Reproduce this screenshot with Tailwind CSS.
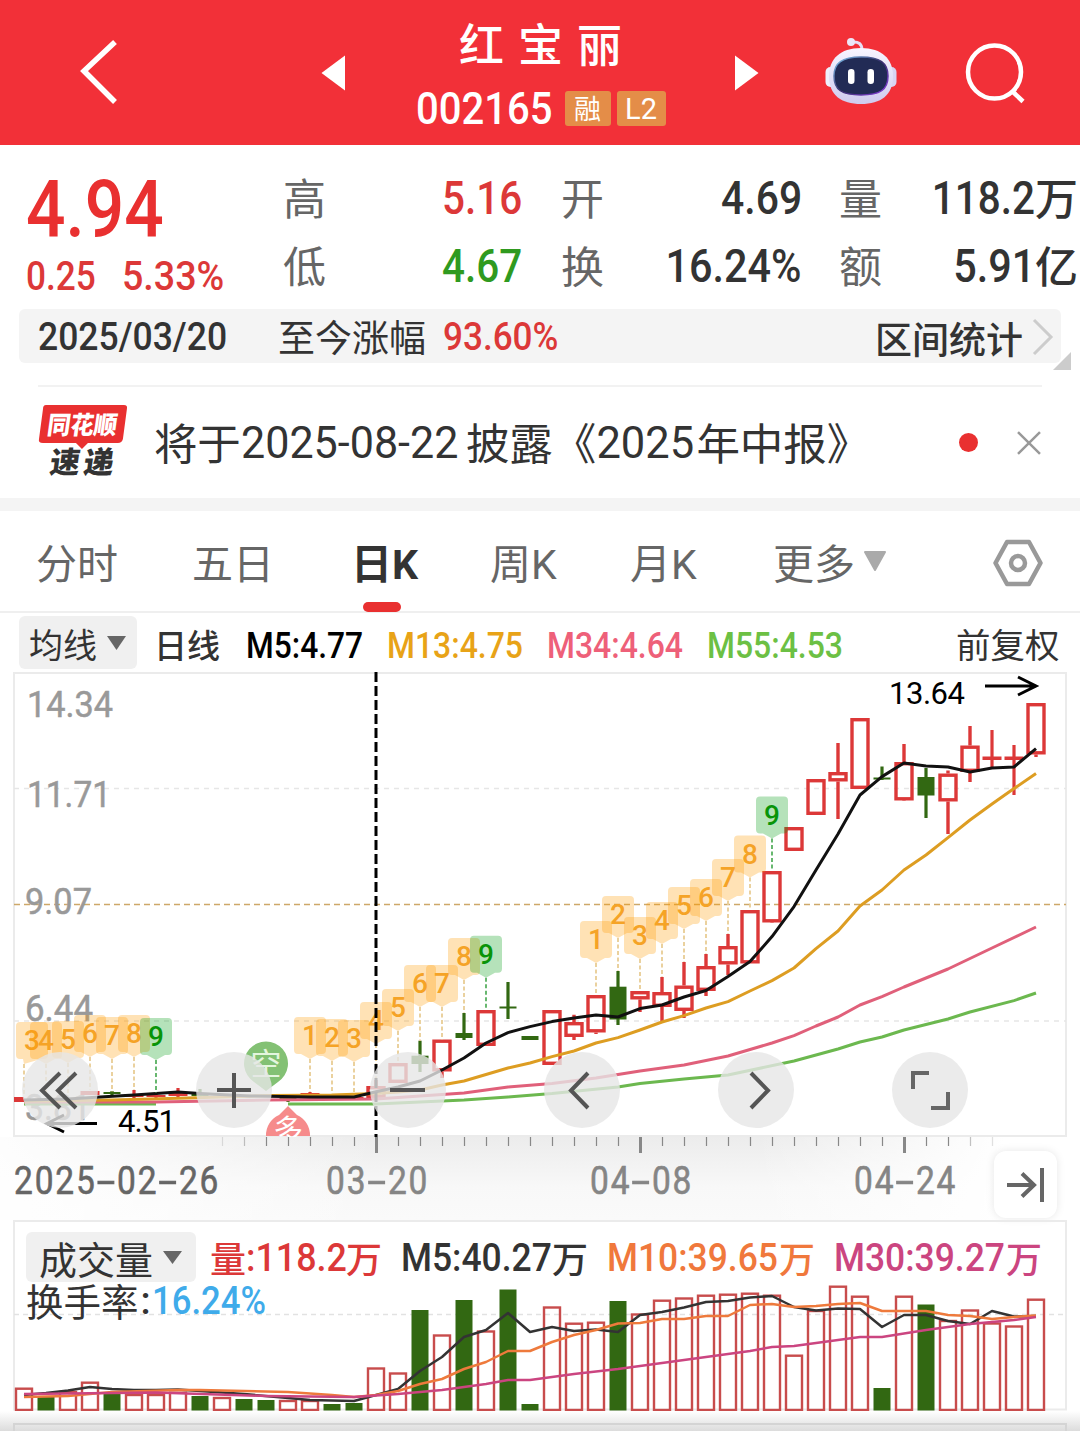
<!DOCTYPE html>
<html lang="zh-CN">
<head>
    <meta charset="UTF-8">
    <meta name="viewport" content="width=device-width, initial-scale=1.0">
    <title>红宝丽 002165</title>
    <script src="https://cdn.jsdelivr.net/npm/@tailwindcss/browser@4"></script>
</head>
<body class="w-[1080px] h-[1435px] overflow-hidden bg-white text-[#333] font-[family-name:Roboto,'Noto_Sans_CJK_SC',sans-serif] leading-none whitespace-nowrap">

    <!-- Header -->
    <header class="h-[145px] bg-[#f23038] text-white flex items-center">
        <div class="w-[200px] pl-[78px]">
            <svg class="w-[42px] h-[70px]" viewBox="0 0 42 70" fill="none" stroke="#fff" stroke-width="5.5"><path d="M37 4 L6 33 L37 64"/></svg>
        </div>
        <div class="w-[200px] pl-[121px]">
            <svg class="w-[25px] h-[36px]" viewBox="0 0 25 36" fill="#fff"><path d="M0.500 18 L24 0.500 V35.500 Z"/></svg>
        </div>
        <div class="w-[281px] flex flex-col items-center pt-[6px]">
            <h1 class="text-[45px] font-medium tracking-[14px] pl-[14px] h-[66px] leading-[44px]">红宝丽</h1>
            <div class="flex items-center h-[36px] w-[250px] gap-[6px]">
                <div class="w-[143px] text-[45px] font-medium"><span class="inline-block origin-left scale-x-[.89]">002165</span></div>
                <span class="w-[46px] h-[35px] rounded-[3px] bg-[#e48d48] text-[27px] flex items-center justify-center pt-[3px]">融</span>
                <span class="w-[49px] h-[35px] rounded-[3px] bg-[#e48d48] text-[29px] flex items-center justify-center pt-[2px]">L2</span>
            </div>
        </div>
        <div class="w-[141px] pl-[53px]">
            <svg class="w-[25px] h-[36px]" viewBox="0 0 25 36" fill="#fff"><path d="M24.500 18 L1 0.500 V35.500 Z"/></svg>
        </div>
        <div class="w-[142px]">
            <svg class="w-[78px] h-[72px]" viewBox="822 36 78 72">
                <defs>
                    <linearGradient id="shell" x1="0" y1="0" x2="0" y2="1"><stop offset="0" stop-color="#f8f5ff"/><stop offset="1" stop-color="#cfcbee"/></linearGradient>
                    <linearGradient id="rim" x1="0" y1="0" x2="1" y2="1"><stop offset="0" stop-color="#7fc4ee"/><stop offset=".5" stop-color="#39306e"/><stop offset="1" stop-color="#8a3de0"/></linearGradient>
                </defs>
                <path d="M852 41 q10 -1 10 8" fill="none" stroke="#e6dff5" stroke-width="3"/>
                <circle cx="851" cy="41" r="4" fill="#ece6f8"/>
                <rect x="825.500" y="66" width="10" height="20" rx="5" fill="#eef0fc"/>
                <rect x="886.500" y="66" width="10" height="20" rx="5" fill="#d8d4f2"/>
                <path d="M861 47 C882 47 893 58 893 75 C893 94 881 103 861 103 C841 103 829 94 829 75 C829 58 840 47 861 47Z" fill="url(#shell)"/>
                <path d="M861 56 C880 56 888 62 888 75 C888 89 880 94 861 94 C842 94 834 89 834 75 C834 62 842 56 861 56Z" fill="#222b55" stroke="url(#rim)" stroke-width="1.500"/>
                <rect x="848" y="68" width="6.500" height="15" rx="3.200" fill="#fff"/>
                <rect x="867.500" y="68" width="6.500" height="15" rx="3.200" fill="#fff"/>
            </svg>
        </div>
        <svg class="w-[62px] h-[62px]" viewBox="0 0 62 62" fill="none" stroke="#fff" stroke-width="4.500"><circle cx="30.500" cy="30" r="26.500"/><path d="M48 49 L59 59.500"/></svg>
    </header>

    <!-- Quote -->
    <section class="h-[164px] flex pt-[18px]">
        <div class="w-[284px] pl-[26px] text-[#e93030] font-medium">
            <div class="h-[94px] pt-[8px] text-[79px]"><span class="inline-block origin-left scale-x-[.88]">4.94</span></div>
            <div class="flex text-[40px] text-[#dc3838]">
                <div class="w-[96px]"><span class="inline-block origin-left scale-x-[.88]">0.25</span></div>
                <div><span class="inline-block origin-left scale-x-[.94]">5.33%</span></div>
            </div>
        </div>
        <div class="w-[238px] text-[47px] font-medium text-right">
            <div class="h-[68px] flex items-center justify-between"><span class="text-[43px] font-normal text-[#666] pt-[7px] -ml-px">高</span><span class="inline-block origin-right scale-x-[.86] text-[#dc3838]">5.16</span></div>
            <div class="h-[68px] flex items-center justify-between"><span class="text-[43px] font-normal text-[#666] pt-[7px] -ml-px">低</span><span class="inline-block origin-right scale-x-[.86] text-[#2f9a1f]">4.67</span></div>
        </div>
        <div class="w-[241px] ml-[39px] text-[47px] font-medium text-right">
            <div class="h-[68px] flex items-center justify-between"><span class="text-[43px] font-normal text-[#666] pt-[7px]">开</span><span class="inline-block origin-right scale-x-[.87]">4.69</span></div>
            <div class="h-[68px] flex items-center justify-between"><span class="text-[43px] font-normal text-[#666] pt-[7px]">换</span><span class="inline-block origin-right scale-x-[.88] -ml-10">16.24%</span></div>
        </div>
        <div class="w-[239px] ml-[37px] text-[47px] font-medium text-right">
            <div class="h-[68px] flex items-center justify-between"><span class="text-[43px] font-normal text-[#666] pt-[7px]">量</span><span class="flex items-center -ml-10"><span class="inline-block origin-right scale-x-[.86]">118.2</span><span class="text-[43px] pt-[6px]">万</span></span></div>
            <div class="h-[68px] flex items-center justify-between"><span class="text-[43px] font-normal text-[#666] pt-[7px]">额</span><span class="flex items-center -ml-10"><span class="inline-block origin-right scale-x-[.88]">5.91</span><span class="text-[43px] pt-[6px]">亿</span></span></div>
        </div>
    </section>

    <!-- Interval stats -->
    <section class="relative mx-[19px] h-[54px] rounded-[6px] bg-[#f4f4f4] flex items-center text-[37px]">
        <div class="w-[259px] pl-[19px] pt-[2px] text-[39px] font-medium"><span class="inline-block origin-left scale-x-[.91]">2025/03/20</span></div>
        <div class="w-[165px] pt-[6px]">至今涨幅</div>
        <div class="w-[432px] pt-[2px] text-[39px] font-medium text-[#dc3838]"><span class="inline-block origin-left scale-x-[.9]">93.60%</span></div>
        <div class="font-medium pt-[11px]">区间统计</div>
        <svg class="ml-[9px] mt-[2px] w-[22px] h-[40px]" viewBox="0 0 22 40" fill="none" stroke="#ccc" stroke-width="3"><path d="M2 3 L19 20 L2 37"/></svg>
        <svg class="absolute left-[1034px] top-[43px] w-[18px] h-[18px]" viewBox="0 0 18 18" fill="#ccc"><path d="M18 0 V18 H0 Z"/></svg>
    </section>

    <!-- News -->
    <section class="mx-[38px] mt-[22px] h-[113px] border-t-2 border-[#f2f2f2] flex items-center">
        <svg class="w-[116px] h-[80px]" viewBox="38 402 116 80">
            <path d="M46 404 H124 Q128 404 127 408 L123 438 Q122 442 118 442 H88 L82 448 L76 442 H43 Q38 442 39 438 L43 408 Q43 404 46 404Z" fill="#e93030"/>
            <g font-family="Noto Sans CJK SC" font-weight="900" transform="skewX(-8)">
                <text x="107" y="433" font-size="25" fill="#fff" textLength="70" lengthAdjust="spacingAndGlyphs">同花顺</text>
                <text x="115" y="472" font-size="30" fill="#333">速</text>
                <text x="149" y="472" font-size="30" fill="#333">递</text>
            </g>
        </svg>
        <div class="w-[806px] text-[43.500px] flex items-center">
            <span class="pt-[6px]">将于</span><span class="w-[225px] pt-[2px]"><span class="inline-block origin-left scale-x-[.99]">2025-08-22</span></span><span class="pt-[6px]">披露《</span><span class="w-[100px] pt-[2px]">2025</span><span class="pt-[6px]">年中报》</span>
        </div>
        <span class="w-[19px] h-[19px] rounded-full bg-[#e93030]"></span>
        <svg class="ml-[38px] w-[26px] h-[26px]" viewBox="0 0 26 26" fill="none" stroke="#999" stroke-width="2.500"><path d="M2 2 L24 24 M24 2 L2 24"/></svg>
    </section>
    <div class="h-[13px] bg-[#f4f4f4]"></div>

    <!-- Tabs -->
    <nav class="h-[102px] border-b-2 border-[#efefef] flex items-center text-[41px] text-[#666] pl-[36px]">
        <div class="w-[156px] pt-[8px]">分时</div>
        <div class="w-[159px] pt-[8px]">五日</div>
        <div class="relative w-[139px] pt-[8px] font-bold text-[#333]">日K<span class="absolute left-[12px] top-[65px] w-[38px] h-[10px] rounded-full bg-[#e93030]"></span></div>
        <div class="w-[140px] pt-[8px]">周K</div>
        <div class="w-[143px] pt-[8px]">月K</div>
        <div class="w-[91px] pt-[8px]">更多</div>
        <svg class="w-[22px] h-[20px]" viewBox="0 0 22 20" fill="#aaa"><path d="M1 1 H21 L11 19Z" stroke="#aaa" stroke-linejoin="round" stroke-width="2"/></svg>
        <svg class="ml-[107px] mt-[3px] w-[50px] h-[48px]" viewBox="0 0 50 48" fill="none" stroke="#999" stroke-width="4.500" stroke-linejoin="round"><path d="M14 3 H36 L47.500 24 L36 45 H14 L2.500 24Z"/><circle cx="25" cy="24" r="7"/></svg>
    </nav>

    <!-- Moving averages -->
    <div class="h-[59px] pl-[19px] flex items-center text-[36.500px] font-medium">
        <div class="w-[118px] h-[53px] rounded-[6px] bg-[#f0f0f0] pl-[10px] flex items-center gap-[10px] text-[34px] font-normal"><span class="pt-[6px]">均线</span><svg class="w-[19px] h-[14px]" viewBox="0 0 19 14" fill="#666"><path d="M0 0 H19 L9.500 14Z"/></svg></div>
        <div class="w-[109px] pl-[17px] pt-[7px] text-[33px]">日线</div>
        <div class="w-[141px] pt-[7px] text-black"><span class="inline-block origin-left scale-x-[.87]">M5:4.77</span></div>
        <div class="w-[160px] pt-[7px] text-[#e8a317]"><span class="inline-block origin-left scale-x-[.875]">M13:4.75</span></div>
        <div class="w-[160px] pt-[7px] text-[#ee6079]"><span class="inline-block origin-left scale-x-[.875]">M34:4.64</span></div>
        <div class="w-[249px] pt-[7px] text-[#6cc044]"><span class="inline-block origin-left scale-x-[.875]">M55:4.53</span></div>
        <div class="pt-[7px] text-[34.500px] font-normal">前复权</div>
    </div>

    <!-- K line chart, drawn in page coordinates -->
    <div class="relative h-[465px]">
        <svg id="kline" class="w-[1080px] h-[465px]" viewBox="0 672 1080 465" font-family="Roboto">
            <g fill="none" stroke="#e6e6e6" stroke-width="1.500">
                <rect x="14" y="673" width="1052" height="463" stroke="#ebebeb" stroke-width="2"/>
                <path d="M14 788.500 H1066 M14 1021 H1066" stroke-dasharray="5 5"/>
            </g>
            <path d="M14 904.500 H1066" stroke="#cda869" stroke-width="1.500" stroke-dasharray="6 4"/>
            <g fill="#999" font-size="37" stroke="#999" stroke-width=".5">
                <text x="27" y="717" textLength="86" lengthAdjust="spacingAndGlyphs">14.34</text>
                <text x="27" y="807" textLength="84" lengthAdjust="spacingAndGlyphs">11.71</text>
                <text x="25" y="914" textLength="67" lengthAdjust="spacingAndGlyphs">9.07</text>
                <text x="25" y="1021" textLength="68" lengthAdjust="spacingAndGlyphs">6.44</text>
                <text x="25" y="1120" textLength="66" lengthAdjust="spacingAndGlyphs">3.81</text>
            </g>
            <g id="candles"></g>
            <g id="averages" fill="none" stroke-width="3" stroke-linejoin="round"></g>
            <path d="M266 1091 L254 1082 A22 22 0 1 1 278 1082 Z" fill="#83c174"/>
            <text x="266" y="1075" font-family="Noto Sans CJK SC" font-size="31" fill="#e4f5de" text-anchor="middle">空</text>
            <path d="M288 1106 L297 1115 A22 22 0 0 1 310 1136 H266 A22 22 0 0 1 279 1115 Z" fill="#f68b8b"/>
            <text x="288" y="1141" font-family="Noto Sans CJK SC" font-size="30" fill="#fff" text-anchor="middle">多</text>
            <g id="markers" font-size="28" font-weight="500" text-anchor="middle"></g>
            <path d="M376 672 V1137" stroke="#000" stroke-width="3" stroke-dasharray="10 4"/>
            <g fill="none" stroke="#000" stroke-width="3">
                <path d="M985 686 H1036 M1018 677 L1036 686 L1018 695"/>
                <path d="M97 1123.500 H47 M64 1115 L47 1123.500 L64 1132"/>
            </g>
            <g fill="#000" font-size="31">
                <text x="889" y="704" textLength="76">13.64</text>
                <text x="118" y="1132" textLength="58">4.51</text>
            </g>
        </svg>
        <!-- chart controls -->
        <div class="absolute left-[22px] top-[380px] flex gap-[98px]">
            <button class="w-[76px] h-[76px] rounded-full bg-[#e6e6e6]/80"><svg viewBox="0 0 76 76" fill="none" stroke="#555" stroke-width="4"><path d="M38 21 L20 38.500 L38 56 M54 21 L36 38.500 L54 56"/></svg></button>
            <button class="w-[76px] h-[76px] rounded-full bg-[#e6e6e6]/80"><svg viewBox="0 0 76 76" fill="none" stroke="#555" stroke-width="4"><path d="M21 38 H55 M38 21 V56"/></svg></button>
            <button class="w-[76px] h-[76px] rounded-full bg-[#e6e6e6]/80"><svg viewBox="0 0 76 76" fill="none" stroke="#555" stroke-width="4"><path d="M20 38 H55"/></svg></button>
            <button class="w-[76px] h-[76px] rounded-full bg-[#e6e6e6]/80"><svg viewBox="0 0 76 76" fill="none" stroke="#555" stroke-width="4"><path d="M44 21 L27 38.500 L44 56"/></svg></button>
            <button class="w-[76px] h-[76px] rounded-full bg-[#e6e6e6]/80"><svg viewBox="0 0 76 76" fill="none" stroke="#555" stroke-width="4"><path d="M33 21 L50 38.500 L33 56"/></svg></button>
            <button class="w-[76px] h-[76px] rounded-full bg-[#e6e6e6]/80"><svg viewBox="0 0 76 76" fill="none" stroke="#666" stroke-width="4"><path d="M21 37 V21 H37 M39 56 H56 V40"/></svg></button>
        </div>
    </div>

    <!-- Date axis -->
    <div class="relative h-[83px]">
        <svg class="w-[1080px] h-[83px]" viewBox="0 1137 1080 83" font-family="Roboto">
            <defs>
                <linearGradient id="down" x1="0" y1="0" x2="0" y2="1"><stop offset="0" stop-color="#ececec"/><stop offset=".6" stop-color="#f8f8f8"/><stop offset="1" stop-color="#fafafa"/></linearGradient>
                <linearGradient id="side" x1="0" y1="0" x2="1" y2="0"><stop offset="0" stop-color="#fff" stop-opacity=".9"/><stop offset=".35" stop-color="#fff" stop-opacity="0"/><stop offset=".7" stop-color="#fff" stop-opacity="0"/><stop offset=".93" stop-color="#fff"/></linearGradient>
            </defs>
            <rect x="0" y="1137" width="1080" height="83" fill="url(#down)"/>
            <rect x="0" y="1137" width="1080" height="83" fill="url(#side)"/>
            <g id="ticks" stroke="#888"></g>
            <g font-size="38" id="dates"></g>
        </svg>
        <button class="absolute left-[994px] top-[14px] w-[63px] h-[67px] rounded-[12px] bg-white shadow-[0_0_8px_rgba(0,0,0,0.1)]">
            <svg viewBox="0 0 63 67" fill="none" stroke="#666" stroke-width="4"><path d="M13 34 H40 M28 22.500 L40 34 L28 45.500 M48 17 V51"/></svg>
        </button>
    </div>

    <!-- Volume -->
    <div class="relative h-[191px]">
        <svg id="volume" class="w-[1080px] h-[191px]" viewBox="0 1220 1080 191">
            <rect x="14" y="1221" width="1052" height="188.500" fill="none" stroke="#ebebeb" stroke-width="2"/>
            <path d="M14 1314.500 H1066" stroke="#e2e2e2" stroke-width="1.500" stroke-dasharray="5 4"/>
            <g id="bars"></g>
            <g id="volAverages" fill="none" stroke-width="2.500" stroke-linejoin="round"></g>
        </svg>
        <div class="absolute left-[26px] top-[12px] text-[38.500px] font-medium">
            <div class="h-[50px] flex items-center">
                <div class="w-[170px] h-[50px] rounded-[6px] bg-[#f0f0f0] pl-[13px] flex items-center gap-[10px] font-normal text-[38px]"><span class="pt-[7px]">成交量</span><svg class="w-[19px] h-[13px]" viewBox="0 0 19 13" fill="#666"><path d="M0 0 H19 L9.500 13Z"/></svg></div>
                <div class="w-[191px] pl-[14px] pt-[3px] flex items-center text-[#dc3838]"><span class="text-[36px] pt-[4px]">量</span><span class="w-[95px]"><span class="inline-block origin-left scale-x-[.93]">:118.2</span></span><span class="ml-[5px] text-[36px] pt-[4px]">万</span></div>
                <div class="w-[192px] pl-[14px] pt-[3px] flex items-center"><span class="w-[151px]"><span class="inline-block origin-left scale-x-[.92]">M5:40.27</span></span><span class="text-[36px] pt-[4px]">万</span></div>
                <div class="w-[241px] pl-[28px] pt-[3px] flex items-center text-[#f0783c]"><span class="w-[172px]"><span class="inline-block origin-left scale-x-[.92]">M10:39.65</span></span><span class="text-[36px] pt-[4px]">万</span></div>
                <div class="pl-[14px] pt-[3px] flex items-center text-[#cb4580]"><span class="w-[172px]"><span class="inline-block origin-left scale-x-[.92]">M30:39.27</span></span><span class="text-[36px] pt-[4px]">万</span></div>
            </div>
            <div class="h-[36px] pt-[2px] flex items-center"><span class="text-[37.500px] font-normal pt-[5px]">换手率</span><span class="ml-[2px]">:</span><span class="ml-[1px] inline-block origin-left scale-x-[.9] text-[#3fabea]">16.24%</span></div>
        </div>
    </div>
    <div class="h-[20px] bg-linear-to-b from-white to-[#dcdcdc] pt-[12px] px-[13px]"><div class="h-[8px] border-2 border-b-0 border-[#d4d4d4]"></div></div>

    <script>
        const RED = "#dc3838";
        const GREEN = "#326812";
        const xOf = i => 24 + 22 * i;

        // [index, colour, body top, body bottom, wick top, wick bottom]
        const candles = [
            [3, "r", 1091, 1095, 1091, 1095], [4, "g", 1092, 1094, 1091, 1096], [5, "r", 1094, 1097, 1090, 1098],
            [6, "r", 1095, 1097, 1094, 1098], [7, "r", 1093, 1096, 1088, 1098], [8, "g", 1094, 1096, 1089, 1098],
            [12, "g", 1098, 1100, 1096, 1102], [13, "r", 1093, 1095, 1092, 1096], [14, "r", 1097, 1099, 1096, 1100], [15, "r", 1097, 1099, 1096, 1100],
            [16, "r", 1086, 1098, 1080, 1098], [17, "r", 1063, 1083, 1063, 1083], [18, "g", 1055.7, 1064, 1040.7, 1072],
            [19, "r", 1039.5, 1071.5, 1039.5, 1078], [20, "g", 1033, 1038, 1013, 1040], [21, "r", 1010, 1046, 1010, 1046],
            [22, "g", 1006.5, 1008.5, 982, 1019], [23, "g", 1036, 1040, 1036, 1040], [24, "r", 1010, 1065, 1010, 1065],
            [25, "r", 1022, 1037, 1014.7, 1040], [26, "r", 995, 1032.5, 995, 1034], [27, "g", 986.7, 1019.5, 971, 1025],
            [28, "r", 991, 999.5, 991, 1012], [29, "r", 992, 1007, 977, 1021], [30, "r", 985.5, 1011, 962, 1018],
            [31, "r", 966, 991, 954, 996], [32, "r", 946, 964.5, 934, 975], [33, "r", 910, 963.5, 910, 963.5],
            [34, "r", 871, 922.5, 871, 923], [35, "r", 827, 851, 827, 851], [36, "r", 779, 815, 779, 815],
            [37, "r", 772, 781.5, 743, 819], [38, "r", 718, 789, 718, 789], [39, "g", 777.5, 779.5, 766.5, 780],
            [40, "r", 762, 800.5, 744, 800], [41, "g", 777, 795.5, 768, 818], [42, "r", 773.5, 801.5, 770.5, 834],
            [43, "r", 745.5, 772, 726, 782], [44, "r", 756.5, 760, 730, 769], [45, "r", 756.5, 760, 745, 795],
            [46, "r", 703, 754.5, 703, 757]
        ];
        let out = `<rect x="14" y="1097" width="10" height="5" fill="${RED}"/>`;
        for (const [i, c, top, bottom, high, low] of candles) {
            const x = xOf(i), color = c === "r" ? RED : GREEN;
            if (c === "r" && bottom - top > 6) {
                out += `<path d="M${x} ${high} V${top} M${x} ${bottom} V${low}" stroke="${color}" stroke-width="3.4"/>`;
                out += `<rect x="${x - 8}" y="${top + 1.7}" width="16" height="${bottom - top - 3.4}" fill="none" stroke="${color}" stroke-width="3.4"/>`;
            } else {
                const w = c === "r" ? 19 : 17;
                out += `<path d="M${x} ${high} V${low}" stroke="${color}" stroke-width="3.2"/>`;
                out += `<rect x="${x - w / 2}" y="${top}" width="${w}" height="${bottom - top}" fill="${color}"/>`;
            }
        }
        document.getElementById("candles").innerHTML = out;

        const averages = [
            ["#6cb84f", "24,1104 156,1104"],
            ["#6cb84f", "288,1104 376,1104 420,1102 464,1100 508,1097 552,1093.6 618,1087 640,1083.6 684,1079 728,1075 794,1061 838,1049 860,1042 882,1037 904,1030 948,1019 970,1012 1014,1000.6 1036,993"],
            ["#e0607a", "24,1102 156,1102 266,1100 376,1099 420,1096 464,1093 508,1087 552,1083.6 596,1078 640,1071 684,1065 728,1056 772,1043 794,1035.600 816,1026 838,1017 860,1005 882,996.6 904,987 948,969 992,948 1036,927"],
            ["#dd9d22", "24,1101 112,1100 187,1098 273,1095.5 332,1095 376,1093.500 398,1092 420,1090 442,1085 464,1081 508,1068 530,1063 552,1056.6 574,1051 596,1043 618,1037.6 640,1030 662,1022 684,1015.6 706,1008 728,1001.6 750,991 772,980.6 794,968 816,948.6 838,931 860,906 882,890 904,870 926,855 948,837.6 970,820 992,804 1014,788.6 1036,773.6"],
            ["#111", "24,1100 68,1099 100,1097 134,1095 178,1092 200,1093.5 250,1096 310,1097 354,1097 376,1091.700 398,1087 420,1081 442,1070 464,1058 486,1043 508,1032.6 530,1026.6 552,1021.6 574,1018 596,1015 618,1017 640,1008.6 662,1005 684,997 706,990.5 728,976.6 750,961.6 772,936.6 794,906.6 816,870 838,834 860,795 882,776.6 904,763 926,766 948,767 970,772 992,768 1014,767 1036,748.6"]
        ];
        document.getElementById("averages").innerHTML = averages.map(([c, p]) => `<polyline points="${p}" stroke="${c}"/>`).join("");

        // [index, digit, box top, end of the dashed stem]
        const markers = [
            [0, 3, 1022, 1096], [1, 4, 1022, 1096], [2, 5, 1021, 1096], [3, 6, 1015, 1090], [4, 7, 1017, 1092], [5, 8, 1015, 1090], [6, 9, 1018, 1093],
            [13, 1, 1017, 1092], [14, 2, 1019, 1094], [15, 3, 1020, 1094], [16, 4, 1002, 1080], [17, 5, 989, 1063], [18, 6, 965, 1041], [19, 7, 965, 1040], [20, 8, 938, 1013], [21, 9, 935.7, 1010],
            [26, 1, 921, 995], [27, 2, 896, 971], [28, 3, 917, 991], [29, 4, 902, 977], [30, 5, 887, 962], [31, 6, 879, 954], [32, 7, 859, 934], [33, 8, 835.6, 910], [34, 9, 796.6, 871]
        ];
        out = "";
        for (const [i, n, y, end] of markers) {
            const x = xOf(i), cx = Math.max(x, 32);
            const fill = n === 9 ? "#009a10" : "#ff9a00";
            out += `<path d="M${x} ${y + 42} V${end}" stroke="${n === 9 ? "#58b060" : "#e8cd94"}" stroke-width="1.8" stroke-dasharray="4 2.500"/>`;
            out += `<path d="M${cx - 12} ${y} h24 q4 0 4 4 v29 q0 4 -4 4 h-3 L${x} ${y + 42} L${cx - 9} ${y + 37} h-3 q-4 0 -4 -4 v-29 q0 -4 4 -4Z" fill="${fill}" fill-opacity=".29"/>`;
            out += `<text x="${cx}" y="${y + 28}" fill="${n === 9 ? "#089408" : "#f5a326"}">${n}</text>`;
        }
        document.getElementById("markers").innerHTML = out;

        // Axis ticks fade at both ends
        out = "";
        for (let i = 9; i <= 44; i++) {
            const major = i === 16 || i === 28 || i === 40;
            const fade = i === 9 || i === 44 ? 0.25 : i === 10 || i === 43 ? 0.5 : 1;
            out += `<path d="M${xOf(i) + 0.5} 1137 v${major ? 16 : 9}" stroke-width="${major ? 3 : 1.2}" opacity="${fade}"/>`;
        }
        document.getElementById("ticks").innerHTML = out;

        const dates = [[14, "2025-02-26", "#666"], [326, "03-20", "#858585"], [590, "04-08", "#858585"], [854, "04-24", "#858585"]];
        out = "";
        for (const [x, text, color] of dates) {
            [...text].forEach((ch, k) => {
                const cx = x + 9.5 + k * 20.6;
                const t = ch === "-" ? `translate(${cx} 1194) scale(1.75 1)` : `translate(${cx} 1194) scale(.88 1)`;
                out += `<text transform="${t}" text-anchor="middle" fill="${color}" stroke="${color}" stroke-width=".6">${ch}</text>`;
            });
        }
        document.getElementById("dates").innerHTML = out;

        const volumes = [
            "r1387.7", "g1397", "r1391", "r1381.7", "g1394", "r1394", "r1394", "r1391.7", "g1396", "r1397", "g1399", "g1400",
            "r1400", "r1400", "g1404", "g1403", "r1367.5", "r1372.5", "g1310", "r1334.5", "g1300", "r1330.5", "g1289.5", "g1404",
            "r1306.5", "r1322.7", "r1321.7", "g1301", "r1313.5", "r1299.7", "r1297.5", "r1294.7", "r1293.7", "r1292.7", "r1294.7", "r1354.7",
            "r1310", "r1285.7", "r1295.7", "g1388", "r1295.7", "g1304.5", "r1320", "r1309.5", "r1322.5", "r1325.5", "r1298.7"
        ];
        document.getElementById("bars").innerHTML = volumes.map((v, i) => {
            const x = xOf(i), y = Number(v.slice(1));
            return v[0] === "g"
                ? `<rect x="${x - 8.5}" y="${y}" width="17" height="${1410.5 - y}" fill="${GREEN}"/>`
                : `<rect x="${x - 8}" y="${y + 1}" width="16" height="${1409 - y}" fill="none" stroke="#c84c4c" stroke-width="2.4"/>`;
        }).join("");

        const volAverages = [
            ["#333", "24,1395 46,1393 68,1390.5 90,1387 112,1389 134,1390 156,1390 178,1389.5 200,1391 244,1394 288,1398 310,1400 354,1401 376,1395 398,1389 420,1371 442,1357 464,1337 486,1330 508,1313 530,1332 552,1327 574,1331 596,1329.5 618,1332 640,1315 662,1312 684,1307.5 706,1302 728,1301 750,1297.5 772,1296 794,1307 816,1310.5 838,1308.500 860,1309 882,1327 904,1315 926,1315 948,1321 970,1324 992,1311 1014,1316.500 1036,1316"],
            ["#ee7a3c", "24,1397 68,1396 112,1392 178,1390 200,1390 288,1392 332,1395 354,1397 376,1395 398,1391 420,1384 442,1379 464,1369 486,1362 508,1351 530,1351 552,1342 574,1335 596,1330 618,1323.5 640,1323 662,1319 684,1319 706,1316 728,1316 750,1305 772,1304 794,1307 816,1306 838,1304 860,1303 882,1311 926,1311 948,1315 970,1316 992,1319 1014,1317 1036,1315.5"],
            ["#cb4580", "24,1394 156,1392.5 266,1396 354,1397 398,1394 442,1390 486,1384 508,1380 530,1380 574,1374 618,1369 684,1360 750,1351 772,1347 794,1346 860,1337 882,1337 926,1330 970,1324 1014,1320 1036,1317"]
        ];
        document.getElementById("volAverages").innerHTML = volAverages.map(([c, p]) => `<polyline points="${p}" stroke="${c}"/>`).join("");
    </script>
</body>
</html>
